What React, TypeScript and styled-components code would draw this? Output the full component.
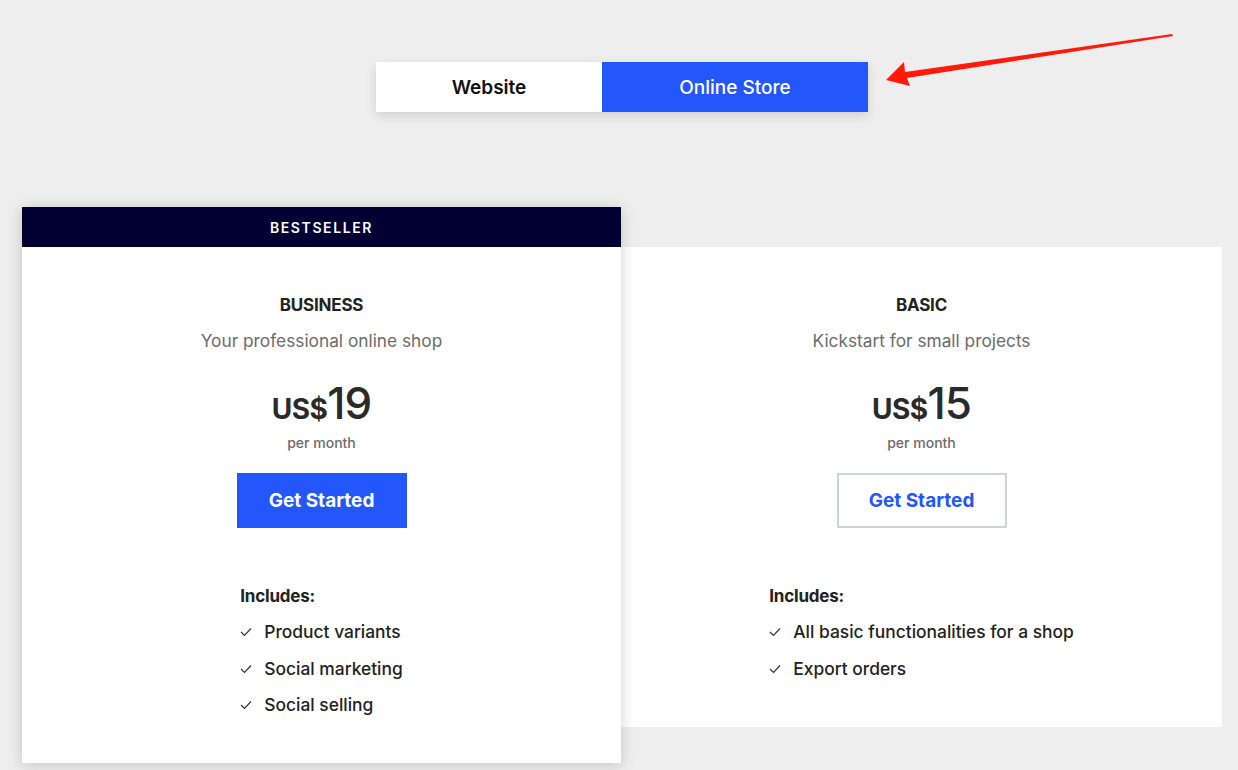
import React from "react";
import styled, { createGlobalStyle } from "styled-components";

const Global = createGlobalStyle`
  html, body { margin: 0; padding: 0; background: #eeeeee; }
  body { font-family: "Inter", "Lato", sans-serif; color: #222; -webkit-font-smoothing: antialiased; }
  * { box-sizing: border-box; }
`;

const Page = styled.div`
  position: relative;
  width: 1238px;
  height: 770px;
  overflow: hidden;
  padding: 62px 0 0 22px;
`;

const Container = styled.div`
  width: 1200px;
  display: flex;
  flex-direction: column;
  align-items: center;
`;

const Toggle = styled.div`
  display: flex;
  height: 50px;
  box-shadow: 0 4px 10px rgba(0, 0, 0, 0.12);
`;

const ToggleButton = styled.button<{ $active?: boolean; $w: number }>`
  width: ${(p) => p.$w}px;
  height: 50px;
  border: 0;
  margin: 0;
  padding: 0;
  font-family: inherit;
  font-size: 19px;
  font-weight: ${(p) => (p.$active ? 500 : 600)};
  background: ${(p) => (p.$active ? "#2356fb" : "#ffffff")};
  color: ${(p) => (p.$active ? "#ffffff" : "#111111")};
  cursor: pointer;
`;

const Cards = styled.div`
  margin-top: 95px;
  display: flex;
  align-items: flex-start;
  width: 1200px;
`;

const Card = styled.div<{ $featured?: boolean }>`
  position: relative;
  z-index: ${(p) => (p.$featured ? 2 : 1)};
  width: ${(p) => (p.$featured ? 599 : 601)}px;
  margin-top: ${(p) => (p.$featured ? 0 : 40)}px;
  background: #fff;
  box-shadow: ${(p) => (p.$featured ? "0 2px 14px rgba(0,0,0,0.18)" : "none")};
`;

const Ribbon = styled.div`
  height: 40px;
  background: #000033;
  color: #fff;
  font-size: 14px;
  font-weight: 600;
  letter-spacing: 1.6px;
  display: flex;
  align-items: center;
  justify-content: center;
`;

const Body = styled.div`
  display: flex;
  flex-direction: column;
  align-items: center;
  padding: 46px 0 46px;
`;

const Title = styled.div`
  font-size: 17px;
  font-weight: 700;
  line-height: 24px;
  color: #222;
  letter-spacing: -0.2px;
`;

const Subtitle = styled.div`
  margin-top: 12px;
  font-size: 17.3px;
  line-height: 24px;
  color: #6b6b6b;
`;

const Price = styled.div`
  margin-top: 26px;
  display: flex;
  align-items: baseline;
  color: #2a2a2a;
  line-height: 48px;
  height: 48px;
`;

const Currency = styled.span`
  font-size: 28px;
  font-weight: 700;
  letter-spacing: -0.5px;
`;

const Amount = styled.span`
  font-size: 44px;
  font-weight: 500;
  letter-spacing: -1px;
`;

const Period = styled.div`
  margin-top: 6px;
  font-size: 14px;
  font-weight: 500;
  line-height: 20px;
  color: #6b6b6b;
`;

const Cta = styled.button<{ $primary?: boolean }>`
  margin-top: 20px;
  width: 170px;
  height: 55px;
  font-family: inherit;
  font-size: 19px;
  font-weight: 700;
  cursor: pointer;
  background: ${(p) => (p.$primary ? "#2356fb" : "#ffffff")};
  color: ${(p) => (p.$primary ? "#ffffff" : "#2356fb")};
  border: ${(p) => (p.$primary ? "0" : "2px solid #cbd4d8")};
`;

const Includes = styled.div`
  margin-top: 56px;
  display: flex;
  flex-direction: column;
  align-items: flex-start;
`;

const IncludesTitle = styled.div`
  font-size: 17px;
  font-weight: 700;
  line-height: 24px;
  color: #222;
  letter-spacing: -0.2px;
`;

const List = styled.ul`
  list-style: none;
  margin: 12px 0 0;
  padding: 0;
  display: flex;
  flex-direction: column;
  gap: 12.5px;
`;

const Item = styled.li`
  display: flex;
  align-items: center;
  gap: 12px;
  font-size: 17.4px;
  line-height: 24px;
  font-weight: 500;
  color: #222;
`;

const Check = () => (
  <svg width="12" height="10" viewBox="0 0 12 10">
    <polyline points="1,5 4.5,8.5 11,1.5" fill="none" stroke="#333" strokeWidth="1.2" />
  </svg>
);

const Arrow = styled.svg`
  position: absolute;
  left: 880px;
  top: 28px;
`;

type Plan = {
  name: string;
  sub: string;
  price: string;
  features: string[];
  featured?: boolean;
};

const plans: Plan[] = [
  {
    name: "BUSINESS",
    sub: "Your professional online shop",
    price: "19",
    features: ["Product variants", "Social marketing", "Social selling"],
    featured: true,
  },
  {
    name: "BASIC",
    sub: "Kickstart for small projects",
    price: "15",
    features: ["All basic functionalities for a shop", "Export orders"],
  },
];

export default function App() {
  return (
    <Page>
      <Global />
      <Container>
        <Toggle>
          <ToggleButton $w={226}>Website</ToggleButton>
          <ToggleButton $w={266} $active>
            Online Store
          </ToggleButton>
        </Toggle>
        <Cards>
          {plans.map((p) => (
            <Card key={p.name} $featured={p.featured}>
              {p.featured && <Ribbon>BESTSELLER</Ribbon>}
              <Body>
                <Title>{p.name}</Title>
                <Subtitle>{p.sub}</Subtitle>
                <Price>
                  <Currency>US$</Currency>
                  <Amount>{p.price}</Amount>
                </Price>
                <Period>per month</Period>
                <Cta $primary={p.featured}>Get Started</Cta>
                <Includes>
                  <IncludesTitle>Includes:</IncludesTitle>
                  <List>
                    {p.features.map((f) => (
                      <Item key={f}>
                        <Check />
                        {f}
                      </Item>
                    ))}
                  </List>
                </Includes>
              </Body>
            </Card>
          ))}
        </Cards>
      </Container>
      <Arrow width="300" height="64" viewBox="0 0 300 64">
        <polygon
          points="292,6 293,8 27,50 30,58 6,52 24,34 25,44"
          fill="#ff1a0a"
        />
      </Arrow>
    </Page>
  );
}
